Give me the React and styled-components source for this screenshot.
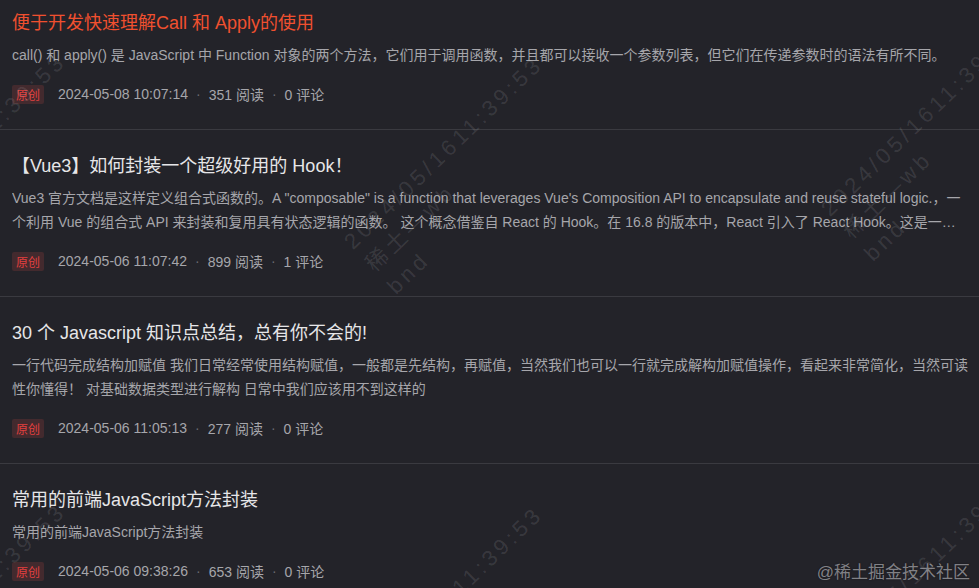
import styled, { createGlobalStyle } from "styled-components";

const GlobalStyle = createGlobalStyle`
  html, body {
    margin: 0;
    padding: 0;
    background: #232329;
  }
  body {
    font-family: "Liberation Sans", Arial, "Noto Sans CJK SC", sans-serif;
  }
`;

const Page = styled.div`
  position: relative;
  width: 979px;
  height: 588px;
  overflow: hidden;
  background: #232329;
`;

const List = styled.ul`
  list-style: none;
  margin: -13px 0 0;
  padding: 0;
`;

const Item = styled.li`
  padding: 22px 10px 25px 12px;
  border-bottom: 1px solid #3a3a40;
`;

const Title = styled.h4`
  margin: 0;
  font-size: 18px;
  line-height: 28px;
  font-weight: normal;
  color: ${(p) => (p.$active ? "#f0502f" : "#e6e6e8")};
  white-space: nowrap;
`;

const Desc = styled.p`
  margin: 6px 0 0;
  font-size: 14px;
  line-height: 24px;
  color: #a6a6ab;
  display: -webkit-box;
  -webkit-line-clamp: 2;
  -webkit-box-orient: vertical;
  overflow: hidden;
`;

const Meta = styled.div`
  display: flex;
  align-items: center;
  margin-top: 17px;
  height: 20px;
  font-size: 14px;
  color: #a6a6ab;
`;

const Badge = styled.span`
  display: inline-flex;
  align-items: center;
  height: 19px;
  padding: 0 4px;
  margin-right: 14px;
  font-size: 12px;
  color: #e2403f;
  background: #432a2e;
  border-radius: 2px;
`;

const Dot = styled.span`
  margin: 0 8px;
  color: #6a6a70;
`;

const Mark = styled.div`
  position: absolute;
  left: ${(p) => p.$x}px;
  top: ${(p) => p.$y}px;
  transform: rotate(-44deg);
  transform-origin: 0 0;
  font-size: 22px;
  line-height: 31px;
  letter-spacing: 4px;
  color: rgba(255, 255, 255, 0.11);
  white-space: nowrap;
  pointer-events: none;
`;

const Brand = styled.div`
  position: absolute;
  right: 9px;
  bottom: 5px;
  font-size: 17px;
  color: rgba(200, 200, 205, 0.6);
  text-shadow: 0 0 2px rgba(0, 0, 0, 0.4);
  pointer-events: none;
`;

const posts = [
  {
    title: "便于开发快速理解Call 和 Apply的使用",
    desc: "call() 和 apply() 是 JavaScript 中 Function 对象的两个方法，它们用于调用函数，并且都可以接收一个参数列表，但它们在传递参数时的语法有所不同。",
    date: "2024-05-08 10:07:14",
    reads: 351,
    comments: 0,
    active: true,
  },
  {
    title: "【Vue3】如何封装一个超级好用的 Hook！",
    desc: "Vue3 官方文档是这样定义组合式函数的。A \"composable\" is a function that leverages Vue's Composition API to encapsulate and reuse stateful logic.，一个利用 Vue 的组合式 API 来封装和复用具有状态逻辑的函数。 这个概念借鉴自 React 的 Hook。在 16.8 的版本中，React 引入了 React Hook。这是一项特别强大的技术，通过封装有状态的函数，极大提高了组件的编写方式。",
    date: "2024-05-06 11:07:42",
    reads: 899,
    comments: 1,
  },
  {
    title: "30 个 Javascript 知识点总结，总有你不会的!",
    desc: "一行代码完成结构加赋值 我们日常经常使用结构赋值，一般都是先结构，再赋值，当然我们也可以一行就完成解构加赋值操作，看起来非常简化，当然可读性你懂得！ 对基础数据类型进行解构 日常中我们应该用不到这样的",
    date: "2024-05-06 11:05:13",
    reads: 277,
    comments: 0,
  },
  {
    title: "常用的前端JavaScript方法封装",
    desc: "常用的前端JavaScript方法封装",
    date: "2024-05-06 09:38:26",
    reads: 653,
    comments: 0,
  },
];

const marks = [
  [-140, 231],
  [-140, 681],
  [337, 234],
  [337, 684],
  [814, 201],
  [814, 651],
];

const App = () => {
  return (
    <>
      <GlobalStyle />
      <Page>
        <List>
          {posts.map((post) => (
            <Item key={post.date}>
              <Title $active={post.active}>{post.title}</Title>
              <Desc>{post.desc}</Desc>
              <Meta>
                <Badge>原创</Badge>
                <span>{post.date}</span>
                <Dot>·</Dot>
                <span>{post.reads} 阅读</span>
                <Dot>·</Dot>
                <span>{post.comments} 评论</span>
              </Meta>
            </Item>
          ))}
        </List>
        {marks.map(([x, y]) => (
          <Mark key={`${x}-${y}`} $x={x} $y={y}>
            2024/05/1611:39:53
            <br />
            稀土—wb
            <br />
            bnd
          </Mark>
        ))}
        <Brand>@稀土掘金技术社区</Brand>
      </Page>
    </>
  );
};

export default App;
